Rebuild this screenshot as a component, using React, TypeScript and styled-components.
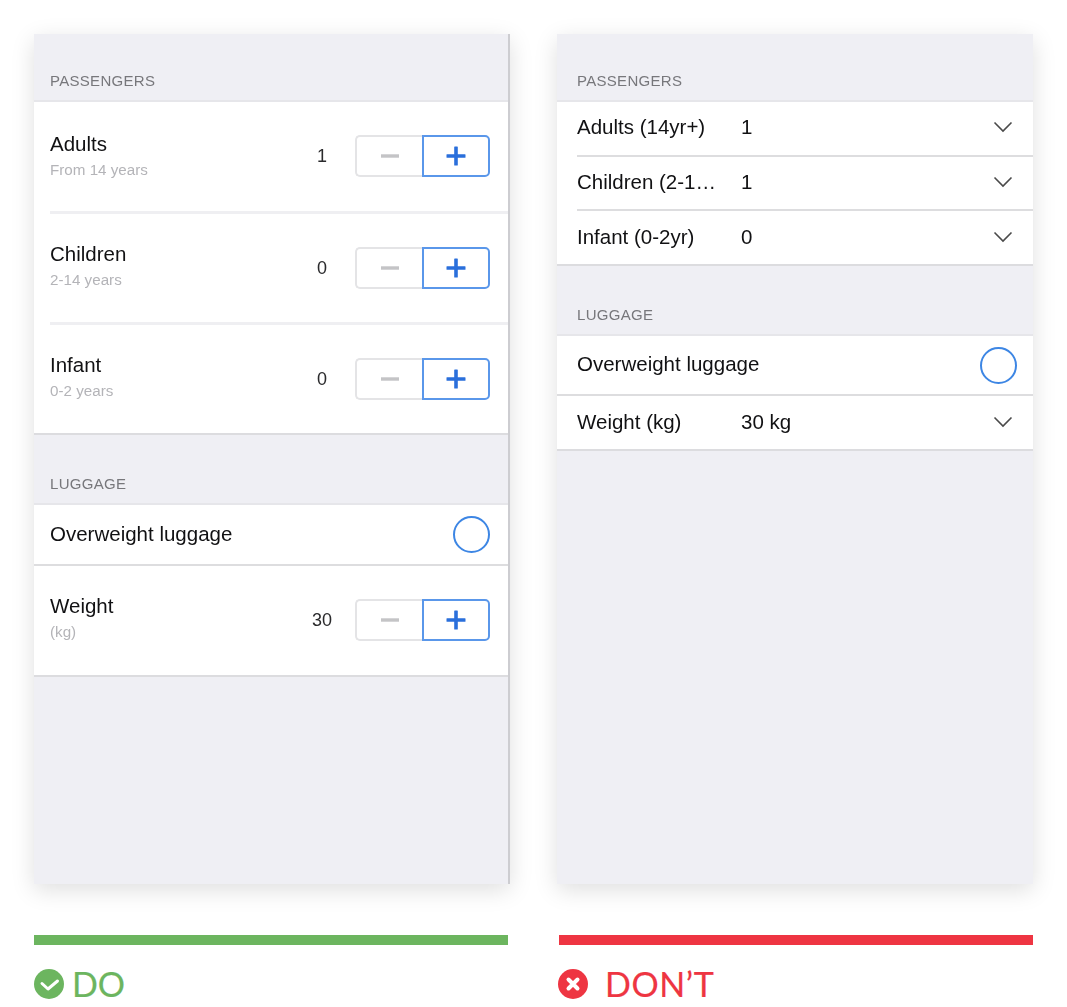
import React from 'react';
import styled, {createGlobalStyle} from "styled-components";

const GlobalStyle = createGlobalStyle`
    html, body {
        margin: 0;
        padding: 0;
        background: #ffffff;
    }
    body {
        font-family: "Liberation Sans", Arial, sans-serif;
    }
`

const passengers = [
    {name: "Adults", hint: "From 14 years", value: "1"},
    {name: "Children", hint: "2-14 years", value: "0"},
    {name: "Infant", hint: "0-2 years", value: "0"},
];

const passengerSelects = [
    {name: "Adults (14yr+)", value: "1"},
    {name: "Children (2-1…", value: "1"},
    {name: "Infant (0-2yr)", value: "0"},
];

const Chevron = () => (
    <ChevronSvg viewBox="0 0 20 12" fill="none" stroke="#4a4a4a" strokeWidth="1.6">
        <polyline points="1.5,1.5 10,10 18.5,1.5"/>
    </ChevronSvg>
);

const Stepper = () => (
    <StepperBox>
        <StepButton>
            <svg width="18" height="4" viewBox="0 0 18 4"><rect width="18" height="3.4" y="0.3" fill="#c4c4c6"/></svg>
        </StepButton>
        <StepButton $active>
            <svg width="20" height="20" viewBox="0 0 20 20" fill="#2a6fdb">
                <rect x="0.5" y="8.2" width="19" height="3.6" rx="0.6"/>
                <rect x="8.2" y="0.5" width="3.6" height="19" rx="0.6"/>
            </svg>
        </StepButton>
    </StepperBox>
);

const DoPanel = () => (
    <Panel $line>
        <SectionLabel $first>Passengers</SectionLabel>
        <Group>
            {passengers.map((p, i) => (
                <TallRow key={p.name} $divider={i > 0}>
                    <TallRowInner $divider={i > 0}>
                        <Names $lift={i > 0}>
                            <Name>{p.name}</Name>
                            <Hint>{p.hint}</Hint>
                        </Names>
                        <Count>{p.value}</Count>
                        <Stepper/>
                    </TallRowInner>
                </TallRow>
            ))}
        </Group>
        <SectionLabel>Luggage</SectionLabel>
        <Group>
            <SwitchRow>
                <SwitchName>Overweight luggage</SwitchName>
                <Radio/>
            </SwitchRow>
            <TallRow>
                <TallRowInner>
                    <Names $lift>
                        <Name>Weight</Name>
                        <Hint>(kg)</Hint>
                    </Names>
                    <Count>30</Count>
                    <Stepper/>
                </TallRowInner>
            </TallRow>
        </Group>
    </Panel>
);

const DontPanel = () => (
    <Panel>
        <SectionLabel $first $wide>Passengers</SectionLabel>
        <Group>
            {passengerSelects.map((p, i) => (
                <SelectRow key={p.name} $last={i === passengerSelects.length - 1}>
                    <SelectName>{p.name}</SelectName>
                    <SelectValue>{p.value}</SelectValue>
                    <Chevron/>
                </SelectRow>
            ))}
        </Group>
        <SectionLabel $wide>Luggage</SectionLabel>
        <Group>
            <SwitchRow $wide>
                <SwitchName>Overweight luggage</SwitchName>
                <Radio/>
            </SwitchRow>
            <SelectRow $last>
                <SelectName>Weight (kg)</SelectName>
                <SelectValue>30 kg</SelectValue>
                <Chevron/>
            </SelectRow>
        </Group>
    </Panel>
);

export default function App() {
    return (
        <Page>
            <GlobalStyle/>
            <Column>
                <DoPanel/>
                <Bar $color="#6cb55f"/>
                <Verdict $color="#6cb55f">
                    <svg width="30" height="30" viewBox="0 0 30 30">
                        <circle cx="15" cy="15" r="15" fill="#6cb55f"/>
                        <polyline points="8,14.5 14,20 23.5,12" fill="none" stroke="#fff" strokeWidth="3" strokeLinecap="round" strokeLinejoin="round"/>
                    </svg>
                    <VerdictText>DO</VerdictText>
                </Verdict>
            </Column>
            <Column>
                <DontPanel/>
                <Bar $color="#ee3542" $inset/>
                <Verdict $color="#ee3542" $inset>
                    <svg width="30" height="30" viewBox="0 0 30 30">
                        <circle cx="15" cy="15" r="15" fill="#ee3542"/>
                        <path d="M10.5 10.5 L19.5 19.5 M19.5 10.5 L10.5 19.5" fill="none" stroke="#fff" strokeWidth="4" strokeLinecap="round"/>
                    </svg>
                    <VerdictText $gap>DON’T</VerdictText>
                </Verdict>
            </Column>
        </Page>
    );
}

const Page = styled.div`
    display: grid;
    grid-template-columns: 476px 476px;
    column-gap: 47px;
    width: 1067px;
    height: 1007px;
    box-sizing: border-box;
    padding: 34px 0 0 34px;
    overflow: hidden;
`
const Column = styled.div`
    display: flex;
    flex-direction: column;
`
const Panel = styled.div<{$line?: boolean}>`
    height: 850px;
    box-sizing: border-box;
    background: #efeff4;
    box-shadow: 0 6px 22px rgba(0, 0, 0, 0.13);
    border-right: ${p => p.$line ? "2px solid #cdcdd1" : "none"};
    color: #111113;
    filter: blur(0.55px);
`
const SectionLabel = styled.div<{$first?: boolean; $wide?: boolean}>`
    padding: ${p => p.$first ? "38px" : "40px"} 0 0 ${p => p.$wide ? "20px" : "16px"};
    height: 28px;
    font-size: 15px;
    line-height: 18px;
    letter-spacing: 0.3px;
    text-transform: uppercase;
    color: #77777b;
`
const Group = styled.div`
    background: #ffffff;
    border-top: 2px solid #e6e6ea;
    border-bottom: 2px solid #dcdcdf;
`
const TallRow = styled.div<{$divider?: boolean}>`
    padding-left: ${p => p.$divider ? "16px" : "0"};
`
const TallRowInner = styled.div<{$divider?: boolean}>`
    display: flex;
    align-items: center;
    height: ${p => p.$divider ? "111px" : "109px"};
    box-sizing: border-box;
    padding: 0 18px ${p => p.$divider ? "0" : "1px"} ${p => p.$divider ? "0" : "16px"};
    border-top: ${p => p.$divider ? "3px solid #efeff2" : "none"};
`
const Names = styled.div<{$lift?: boolean}>`
    flex: 1;
    display: flex;
    flex-direction: column;
    gap: 5px;
    margin-bottom: ${p => p.$lift ? "5px" : "2px"};
`
const Name = styled.div`
    font-size: 20.5px;
    line-height: 24px;
`
const SwitchName = styled(Name)`
    margin-bottom: 2px;
`
const Hint = styled.div`
    font-size: 15.2px;
    line-height: 18px;
    color: #b4b4b8;
`
const Count = styled.div`
    width: 44px;
    margin-right: 11px;
    text-align: center;
    font-size: 18px;
    color: #2a2a2c;
`
const StepperBox = styled.div`
    display: flex;
    width: 135px;
    height: 42px;
`
const StepButton = styled.div<{$active?: boolean}>`
    flex: ${p => p.$active ? "0 0 68px" : "1"};
    display: flex;
    align-items: center;
    justify-content: center;
    box-sizing: border-box;
    border: ${p => p.$active ? "2px solid #5a97ea" : "2px solid #e4e4e6"};
    border-right-width: ${p => p.$active ? "2px" : "0"};
    border-radius: ${p => p.$active ? "0 5px 5px 0" : "5px 0 0 5px"};
`
const SwitchRow = styled.div<{$wide?: boolean}>`
    display: flex;
    align-items: center;
    justify-content: space-between;
    height: ${p => p.$wide ? "60px" : "61px"};
    box-sizing: border-box;
    padding: 0 ${p => p.$wide ? "16px" : "18px"} 0 ${p => p.$wide ? "20px" : "16px"};
    border-bottom: 2px solid #dddddf;
`
const Radio = styled.div`
    width: 37px;
    height: 37px;
    box-sizing: border-box;
    border: 2.5px solid #3d86e4;
    border-radius: 50%;
`
const SelectRow = styled.div<{$last?: boolean}>`
    display: flex;
    align-items: center;
    height: ${p => p.$last ? "53px" : "54.5px"};
    box-sizing: border-box;
    margin-left: 20px;
    padding-right: 20px;
    padding-bottom: 2px;
    border-bottom: ${p => p.$last ? "none" : "2px solid #dddddf"};
`
const SelectName = styled.div`
    width: 140px;
    margin-right: 24px;
    font-size: 20.5px;
    line-height: 24px;
    white-space: nowrap;
`
const SelectValue = styled.div`
    flex: 1;
    font-size: 20.5px;
    line-height: 24px;
`
const ChevronSvg = styled.svg`
    width: 20px;
    height: 12px;
`
const Bar = styled.div<{$color: string; $inset?: boolean}>`
    height: 10px;
    margin: 51px ${p => p.$inset ? "0" : "2px"} 0 ${p => p.$inset ? "2px" : "0"};
    background: ${p => p.$color};
`
const Verdict = styled.div<{$color: string; $inset?: boolean}>`
    display: flex;
    align-items: center;
    margin-top: 24px;
    margin-left: ${p => p.$inset ? "1px" : "0"};
    color: ${p => p.$color};
`
const VerdictText = styled.span<{$gap?: boolean}>`
    margin-left: ${p => p.$gap ? "17px" : "8px"};
    font-family: Lato, "Liberation Sans", sans-serif;
    font-size: 34px;
    line-height: 30px;
    letter-spacing: ${p => p.$gap ? "0.6px" : "0"};
    -webkit-text-stroke: 0.2px currentColor;
`
